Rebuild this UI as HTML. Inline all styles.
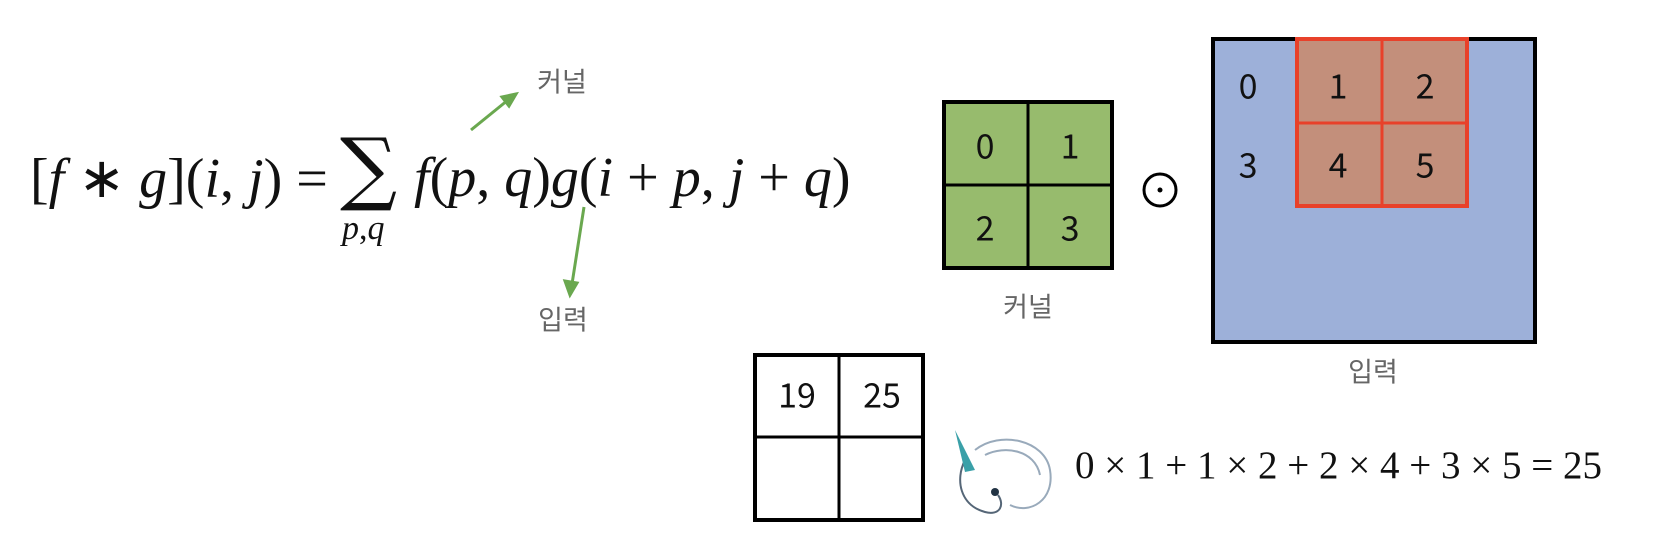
<!DOCTYPE html>
<html><head><meta charset="utf-8"><style>
body{margin:0;width:1660px;height:538px;background:#fff;position:relative;overflow:hidden;font-family:"Liberation Sans","Noto Sans CJK KR",sans-serif}
.a{position:absolute}
.m{font-family:"Liberation Serif",serif;color:#111}
.m i{font-style:italic}
.n{font-family:"Noto Sans CJK KR","Liberation Sans",sans-serif;font-size:34px;color:#111;position:absolute;transform:translate(-50%,-50%)}
.k{font-family:"Noto Sans CJK KR",sans-serif;color:#666;font-size:27px;position:absolute;transform:translate(-50%,-50%)}
</style></head><body>
<div class="a m" style="left:30px;top:146px;font-size:56px;white-space:nowrap">[<i>f</i> ∗ <i>g</i>](<i>i</i>, <i>j</i>) =</div>
<div class="a" style="left:340px;top:128px;font-family:'DejaVu Serif',serif;font-size:80px;line-height:80px;color:#111">∑</div>
<div class="a m" style="left:342px;top:210px;font-size:34px"><i>p</i>,<i>q</i></div>
<div class="a m" style="left:414px;top:146px;font-size:56px;white-space:nowrap"><i>f</i>(<i>p</i>, <i>q</i>)<i>g</i>(<i>i</i> + <i>p</i>, <i>j</i> + <i>q</i>)</div>
<svg class="a" style="left:0;top:0" width="1660" height="538">
<g stroke="#6aa84f" stroke-width="3" fill="#6aa84f">
<line x1="471" y1="130" x2="508" y2="100"/><polygon points="516,94 502,97 509,106"/>
<line x1="584" y1="207" x2="572" y2="284"/><polygon points="570,295 565,281 577,283"/>
</g>
<rect x="944" y="102" width="168" height="166" fill="#97bb6d" stroke="#000" stroke-width="4"/>
<line x1="1028" y1="102" x2="1028" y2="268" stroke="#000" stroke-width="3"/>
<line x1="944" y1="185" x2="1112" y2="185" stroke="#000" stroke-width="3"/>
<circle cx="1160" cy="190" r="16" fill="none" stroke="#000" stroke-width="3"/><circle cx="1160" cy="190" r="2.5"/>
<rect x="1213" y="39" width="322" height="303" fill="#9db0d9" stroke="#000" stroke-width="4"/>
<rect x="1297" y="39" width="170" height="167" fill="#c38f7b" stroke="#e8412a" stroke-width="4"/>
<line x1="1382" y1="39" x2="1382" y2="206" stroke="#e8412a" stroke-width="3"/>
<line x1="1297" y1="123" x2="1467" y2="123" stroke="#e8412a" stroke-width="3"/>
<rect x="755" y="355" width="168" height="165" fill="#fff" stroke="#000" stroke-width="4"/>
<line x1="839" y1="355" x2="839" y2="520" stroke="#000" stroke-width="3"/>
<line x1="755" y1="437" x2="923" y2="437" stroke="#000" stroke-width="3"/>
<g fill="none" stroke="#9ab" stroke-width="2">
<path d="M975 450 C1000 430 1045 440 1050 470 C1055 500 1030 515 1010 505"/>
<path d="M985 455 C1005 445 1035 450 1040 475"/>
<path d="M965 460 C955 480 960 505 985 512 C1000 516 1005 505 998 495" stroke="#567"/>
</g>
<polygon points="955,430 975,470 965,472" fill="#3aa0a8"/>
<circle cx="995" cy="492" r="4" fill="#234"/>
</svg>
<div class="k" style="left:562px;top:80px">커널</div>
<div class="k" style="left:563px;top:318px">입력</div>
<div class="k" style="left:1028px;top:305px">커널</div>
<div class="k" style="left:1373px;top:370px">입력</div>
<div class="n" style="left:985px;top:144px">0</div><div class="n" style="left:1070px;top:144px">1</div>
<div class="n" style="left:985px;top:226px">2</div><div class="n" style="left:1070px;top:226px">3</div>
<div class="n" style="left:1248px;top:84px">0</div><div class="n" style="left:1338px;top:84px">1</div><div class="n" style="left:1425px;top:84px">2</div>
<div class="n" style="left:1248px;top:163px">3</div><div class="n" style="left:1338px;top:163px">4</div><div class="n" style="left:1425px;top:163px">5</div>
<div class="n" style="left:797px;top:393px">19</div><div class="n" style="left:882px;top:393px">25</div>
<div class="a" style="left:1075px;top:443px;font-family:'Liberation Serif',serif;font-size:39px;color:#111;white-space:nowrap">0 × 1 + 1 × 2 + 2 × 4 + 3 × 5 = 25</div>
</body></html>
